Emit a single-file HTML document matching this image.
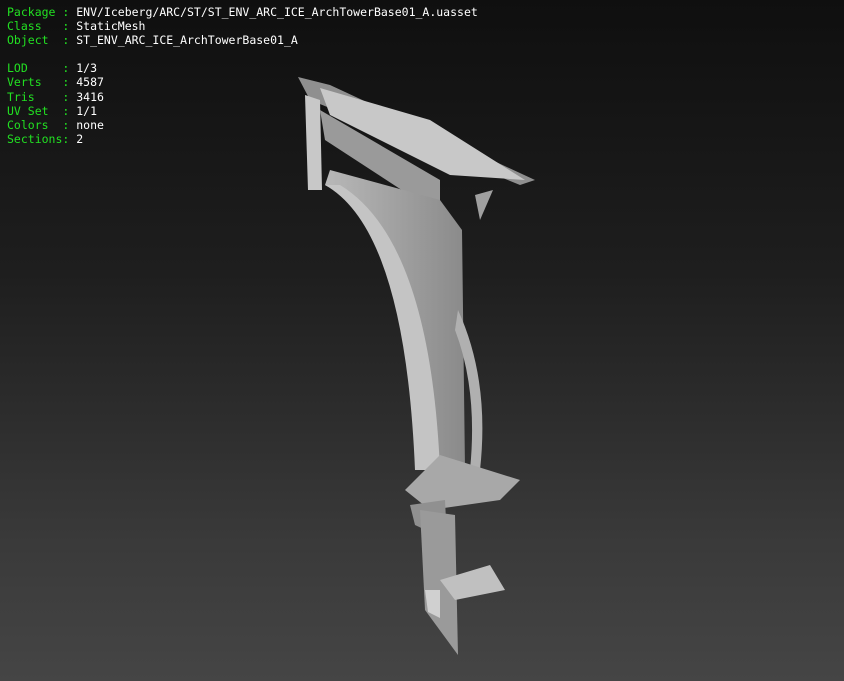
<!DOCTYPE html>
<html><head><style>
html,body{margin:0;padding:0}
body{width:844px;height:681px;overflow:hidden;background:linear-gradient(#0f0f0f 0%,#1e1e1e 40%,#3a3a3a 80%,#454545 100%);position:relative}
pre{position:absolute;left:7px;top:5px;margin:0;font-size:11.5px;line-height:14.1px;color:#fff;font-family:"DejaVu Sans Mono","Liberation Mono",monospace;letter-spacing:0}
.g{color:#22e022}
svg{position:absolute;left:0;top:0}
</style></head><body>
<svg width="844" height="681">
<defs><linearGradient id="a" x1="0" y1="0" x2="1" y2="0"><stop offset="0" stop-color="#b8b8b8"/><stop offset="1" stop-color="#8a8a8a"/></linearGradient></defs>
<polygon points="298,77 330,85 535,180 520,185 310,100" fill="#8f8f8f"/>
<polygon points="320,88 430,120 525,180 450,175 330,115" fill="#c8c8c8"/>
<polygon points="305,95 320,100 322,190 308,190" fill="#c8c8c8"/>
<polygon points="320,110 440,180 440,215 325,140" fill="#9a9a9a"/>
<path d="M325,185 Q420,230 440,470 L465,470 L462,230 L440,200 L330,170 Z" fill="url(#a)"/>
<path d="M325,185 Q405,230 415,470 L440,470 Q430,240 340,185 Z" fill="#c4c4c4"/>
<path d="M458,310 Q490,380 480,470 L470,470 Q478,390 455,330 Z" fill="#b0b0b0"/>
<polygon points="475,195 493,190 480,220" fill="#a0a0a0"/>
<polygon points="405,490 440,455 520,480 500,500 430,510" fill="#a8a8a8"/>
<polygon points="410,505 445,500 447,540 415,525" fill="#909090"/>
<polygon points="420,510 455,515 458,655 425,610" fill="#9a9a9a"/>
<polygon points="440,580 490,565 505,590 455,600" fill="#c0c0c0"/>
<polygon points="425,590 440,590 440,618 428,612" fill="#d0d0d0"/>
</svg>
<pre><span class="g">Package :</span> ENV/Iceberg/ARC/ST/ST_ENV_ARC_ICE_ArchTowerBase01_A.uasset
<span class="g">Class   :</span> StaticMesh
<span class="g">Object  :</span> ST_ENV_ARC_ICE_ArchTowerBase01_A

<span class="g">LOD     :</span> 1/3
<span class="g">Verts   :</span> 4587
<span class="g">Tris    :</span> 3416
<span class="g">UV Set  :</span> 1/1
<span class="g">Colors  :</span> none
<span class="g">Sections:</span> 2</pre>
</body></html>
